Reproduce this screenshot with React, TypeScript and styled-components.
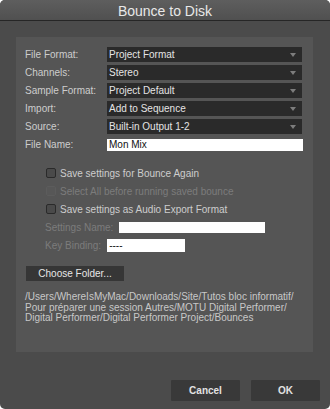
import { Fragment } from 'react';
import styled, { createGlobalStyle } from 'styled-components';

const GlobalStyle = createGlobalStyle`
  html, body {
    margin: 0;
    padding: 0;
    background: #ffffff;
  }
  body {
    font-family: "Liberation Sans", Arial, sans-serif;
  }
`;

const Window = styled.div`
  width: 330px;
  height: 409px;
  display: flex;
  flex-direction: column;
  background: #4b4b4b;
  border-radius: 5px;
  overflow: hidden;
`;

const TitleBar = styled.div`
  height: 21px;
  box-sizing: border-box;
  display: flex;
  align-items: center;
  justify-content: center;
  background: linear-gradient(#5e5e5e, #505050);
  border-bottom: 1px solid #262626;
  color: #e8e8e8;
  font-size: 14px;
  padding-top: 1px;
`;

const Body = styled.div`
  display: flex;
  flex-direction: column;
  padding: 16px 17px 0 16px;
`;

const Panel = styled.div`
  height: 315px;
  box-sizing: border-box;
  background: #555555;
  padding: 10px 0 0 9px;
  display: flex;
  flex-direction: column;
`;

const FieldGrid = styled.div`
  display: grid;
  grid-template-columns: 82px 195px;
  grid-auto-rows: 15px;
  row-gap: 3px;
  align-items: center;
`;

const Label = styled.span<{ $disabled?: boolean }>`
  font-size: 10px;
  color: ${p => (p.$disabled ? '#7c7c7c' : '#cdcdcd')};
  white-space: nowrap;
`;

const Select = styled.div`
  height: 15px;
  background: #2a2a2a;
  color: #e4e4e4;
  font-size: 10px;
  display: flex;
  align-items: center;
  justify-content: space-between;
  padding: 0 6px 0 2px;
  box-sizing: border-box;
`;

const Arrow = styled.span`
  width: 0;
  height: 0;
  border-left: 3px solid transparent;
  border-right: 3px solid transparent;
  border-top: 4px solid #7d7d7d;
`;

const TextInput = styled.div<{ $width: number; $height?: number }>`
  width: ${p => p.$width}px;
  height: ${p => p.$height ?? 11}px;
  background: #ffffff;
  color: #111;
  font-size: 10px;
  line-height: ${p => p.$height ?? 11}px;
  padding-left: 2px;
  box-sizing: border-box;
`;

const Options = styled.div`
  margin-top: 12px;
  padding-left: 21px;
  display: flex;
  flex-direction: column;
`;

const OptionRow = styled.div`
  height: 18px;
  display: flex;
  align-items: center;
  gap: 4px;
`;

const Checkbox = styled.span<{ $disabled?: boolean }>`
  width: 10px;
  height: 10px;
  box-sizing: border-box;
  border-radius: 2px;
  border: 1px solid ${p => (p.$disabled ? '#5c5c5c' : '#2a2a2a')};
  background: ${p => (p.$disabled ? '#575757' : '#4a4a4a')};
`;

const FieldRow = styled.div`
  height: 18px;
  display: flex;
  align-items: center;
  gap: 6px;
  margin-left: -1px;
`;

const FolderButton = styled.div`
  margin: 12px 0 0 1px;
  width: 98px;
  height: 15px;
  background: #363636;
  color: #e6e6e6;
  font-size: 10px;
  display: flex;
  align-items: center;
  justify-content: center;
`;

const PathText = styled.div`
  margin-top: 11px;
  font-size: 10px;
  line-height: 10.5px;
  color: #c8c8c8;
`;

const Footer = styled.div`
  flex: 1;
  display: flex;
  justify-content: flex-end;
  align-items: flex-end;
  gap: 11px;
  padding: 0 10px 8px 0;
`;

const DialogButton = styled.div`
  width: 69px;
  height: 21px;
  background: #393939;
  color: #e2e2e2;
  font-size: 10px;
  font-weight: bold;
  display: flex;
  align-items: center;
  justify-content: center;
  border-radius: 1px;
`;

const selects = [
  ['File Format:', 'Project Format'],
  ['Channels:', 'Stereo'],
  ['Sample Format:', 'Project Default'],
  ['Import:', 'Add to Sequence'],
  ['Source:', 'Built-in Output 1-2'],
];

export default function App() {
  return (
    <>
      <GlobalStyle />
      <Window>
        <TitleBar>Bounce to Disk</TitleBar>
        <Body>
          <Panel>
            <FieldGrid>
              {selects.map(([label, value]) => (
                <Fragment key={label}>
                  <Label>{label}</Label>
                  <Select>
                    <span>{value}</span>
                    <Arrow />
                  </Select>
                </Fragment>
              ))}
              <Label>File Name:</Label>
              <TextInput $width={196} $height={12}>Mon Mix</TextInput>
            </FieldGrid>

            <Options>
              <OptionRow>
                <Checkbox />
                <Label>Save settings for Bounce Again</Label>
              </OptionRow>
              <OptionRow>
                <Checkbox $disabled />
                <Label $disabled>Select All before running saved bounce</Label>
              </OptionRow>
              <OptionRow>
                <Checkbox />
                <Label>Save settings as Audio Export Format</Label>
              </OptionRow>
              <FieldRow>
                <Label $disabled>Settings Name:</Label>
                <TextInput $width={146} />
              </FieldRow>
              <FieldRow>
                <Label $disabled>Key Binding:</Label>
                <TextInput $width={78} $height={13}>----</TextInput>
              </FieldRow>
            </Options>

            <FolderButton>Choose Folder...</FolderButton>

            <PathText>
              /Users/WhereIsMyMac/Downloads/Site/Tutos bloc informatif/
              <br />
              Pour préparer une session Autres/MOTU Digital Performer/
              <br />
              Digital Performer/Digital Performer Project/Bounces
            </PathText>
          </Panel>
        </Body>
        <Footer>
          <DialogButton>Cancel</DialogButton>
          <DialogButton>OK</DialogButton>
        </Footer>
      </Window>
    </>
  );
}
